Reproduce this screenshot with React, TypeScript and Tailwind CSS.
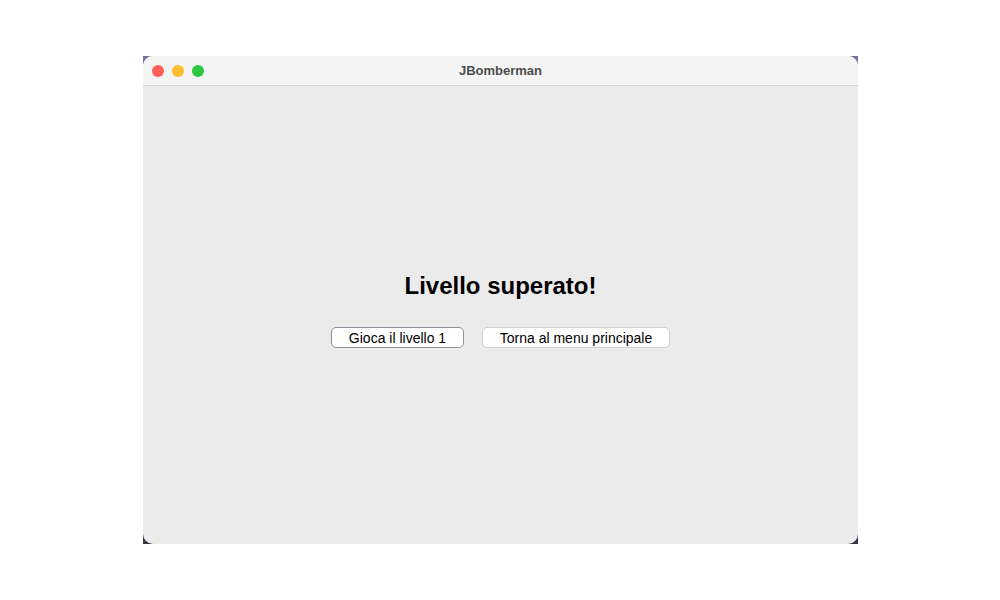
export default function App() {
  return (
    <div className="w-[1000px] h-[600px] bg-white pt-[56px] pl-[143px]">
      {/* window frame with desktop peeking out at the corners */}
      <div className="w-[715px] h-[488px] bg-gradient-to-b from-[#7b6f9c] to-[#3b3040]">
        <div className="w-full h-full rounded-[10px] overflow-hidden flex flex-col bg-[#ebebeb]">
          <div className="relative h-[30px] flex items-center justify-center bg-[#f4f4f4] border-b border-[#d6d6d6]">
            <div className="absolute left-[9px] top-[9px] flex gap-[8px]">
              <span className="w-[12px] h-[12px] rounded-full bg-[#fe5f57]" />
              <span className="w-[12px] h-[12px] rounded-full bg-[#febc2e]" />
              <span className="w-[12px] h-[12px] rounded-full bg-[#28c840]" />
            </div>
            <span className="text-[13px] font-bold text-[#4d4d4d] font-['Liberation_Sans',sans-serif]">
              JBomberman
            </span>
          </div>
          <div className="flex-1 flex flex-col items-center justify-center pb-[10px] font-['Liberation_Sans',sans-serif]">
            <h1 className="text-[24px] font-bold text-black leading-[28px]">Livello superato!</h1>
            <div className="mt-[27px] flex gap-[18px]">
              <button className="w-[133px] h-[21px] rounded-[5px] bg-white border border-[#8b929c] text-[14px] text-black leading-none">
                Gioca il livello 1
              </button>
              <button className="w-[188px] h-[21px] rounded-[5px] bg-white border border-[#cfcfcf] text-[14px] text-black leading-none">
                Torna al menu principale
              </button>
            </div>
          </div>
        </div>
      </div>
    </div>
  );
}
